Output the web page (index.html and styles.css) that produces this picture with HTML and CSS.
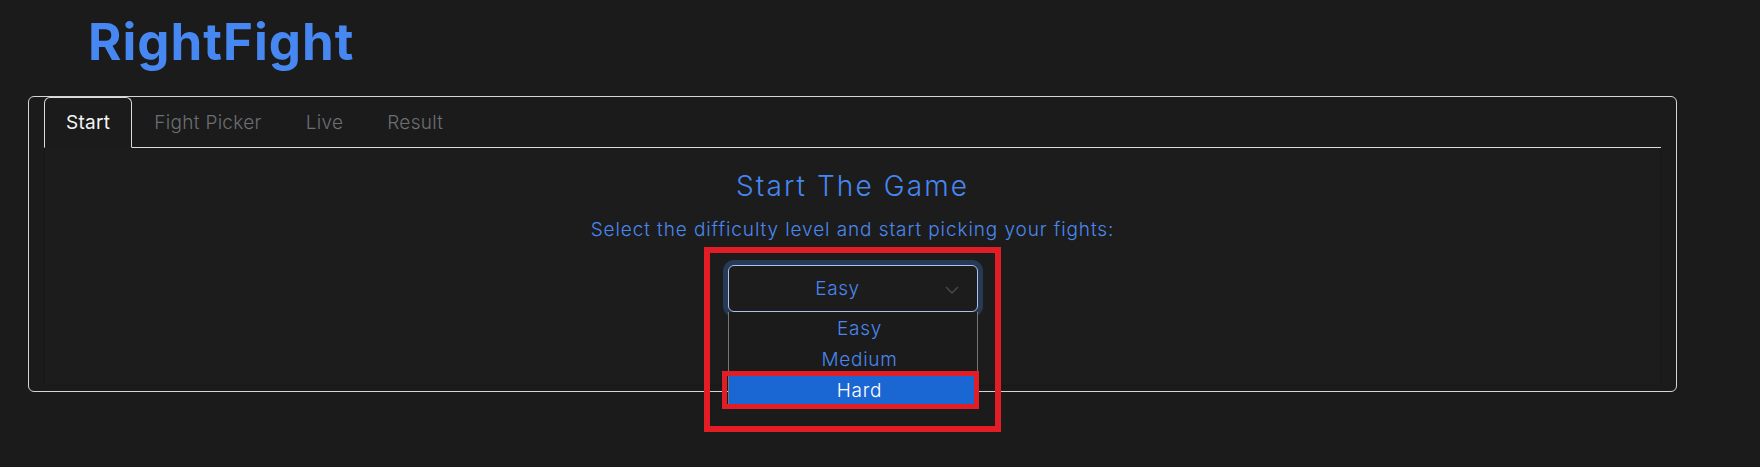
FILE: index.html
```html
<!DOCTYPE html>
<html lang="en">
<head>
<meta charset="utf-8">
<title>RightFight</title>
<link rel="stylesheet" href="styles.css">
</head>
<body>
<div class="page">
  <header class="brand">
    <h1 class="brand-title">RightFight</h1>
  </header>
  <section class="card">
    <ul class="tabs">
      <li class="tab active">Start</li>
      <li class="tab">Fight Picker</li>
      <li class="tab">Live</li>
      <li class="tab">Result</li>
    </ul>
    <div class="panel">
      <h2 class="panel-title">Start The Game</h2>
      <p class="panel-text">Select the difficulty level and start picking your fights:</p>
      <div class="select-wrap">
        <div class="select">
          <span class="select-value">Easy</span>
          <svg class="chevron" width="14" height="8" viewBox="0 0 14 8"><path d="M1 1l6 6 6-6" fill="none" stroke="#4a4a4a" stroke-width="1.4"/></svg>
        </div>
        <ul class="dropdown">
          <li class="option">Easy</li>
          <li class="option">Medium</li>
          <li class="option selected">Hard</li>
        </ul>
        <div class="annot annot-outer"></div>
        <div class="annot annot-inner"></div>
      </div>
    </div>
  </section>
</div>
</body>
</html>
```
FILE: styles.css
```css
* { box-sizing: border-box; }
html, body { margin: 0; padding: 0; }
body {
  background: #1b1b1b;
  font-family: "Inter", "Noto Sans", sans-serif;
  color: #e8e8e8;
  height: 467px;
  overflow: hidden;
}
.page { padding: 0 83px 0 28px; }
.brand { padding: 11px 0 0 60px; height: 96px; }
.brand-title {
  margin: 0;
  font-size: 51px;
  line-height: 62px;
  font-weight: 700;
  color: #4687f2;
  letter-spacing: 1px;
}
.card {
  border: 1px solid #d6d6d6;
  border-radius: 6px;
  padding: 0 15px 5px 15px;
}
.tabs {
  list-style: none;
  margin: 0;
  padding: 0;
  display: flex;
  border-bottom: 1px solid #dcdcdc;
}
.tab {
  margin-bottom: -1px;
  padding: 13px 21px 12px;
  border: 1px solid transparent;
  border-radius: 6px 6px 0 0;
  font-size: 19px;
  line-height: 24px;
  color: #6b6e72;
  font-weight: 300;
  letter-spacing: 0.3px;
}
.tab.active {
  color: #f4f4f4;
  border-color: #dcdcdc #dcdcdc #1b1b1b;
  background: #1b1b1b;
  font-weight: 400;
}
.panel {
  background: #1c1c1c;
  border: 1px solid #171717;
  border-top: 0;
  padding: 22px 0 73px;
  text-align: center;
}
.panel-title {
  margin: 0;
  font-size: 28px;
  line-height: 32px;
  font-weight: 300;
  color: #4687f2;
  letter-spacing: 2.1px;
}
.panel-text {
  margin: 16px 0 0;
  font-size: 19px;
  line-height: 24px;
  font-weight: 300;
  color: #4a88f0;
  letter-spacing: 0.9px;
}
.select-wrap {
  position: relative;
  width: 250px;
  margin: 23px auto 0;
}
.select {
  height: 47px;
  border: 1px solid #a9c2ee;
  border-radius: 6px;
  box-shadow: 0 0 0 5px #263955;
  display: flex;
  align-items: center;
  padding: 0 42px 0 12px;
  position: relative;
}
.select-value {
  flex: 1;
  text-align: center;
  font-size: 19px;
  color: #4a86ee;
  font-weight: 300;
  letter-spacing: 0.6px;
}
.chevron { position: absolute; right: 18px; top: 20px; }
.dropdown {
  position: absolute;
  top: 47px;
  left: 0;
  width: 250px;
  margin: 0;
  padding: 1px 0 0;
  list-style: none;
  background: #1b1b1b;
  border: 1px solid #767676;
  border-top: 0;
}
.option {
  height: 31px;
  line-height: 31px;
  padding-left: 14px;
  text-align: center;
  font-size: 19px;
  font-weight: 300;
  color: #4a86ee;
  letter-spacing: 0.7px;
}
.option.selected { background: #1a66d2; color: #ffffff; }
.annot {
  position: absolute;
  border-style: solid;
  border-color: #e21d26;
}
.annot-outer { left: -24px; top: -18px; width: 297px; height: 185px; border-width: 6px; }
.annot-inner { left: -6px; top: 106px; width: 257px; height: 38px; border-width: 5px; }
```
